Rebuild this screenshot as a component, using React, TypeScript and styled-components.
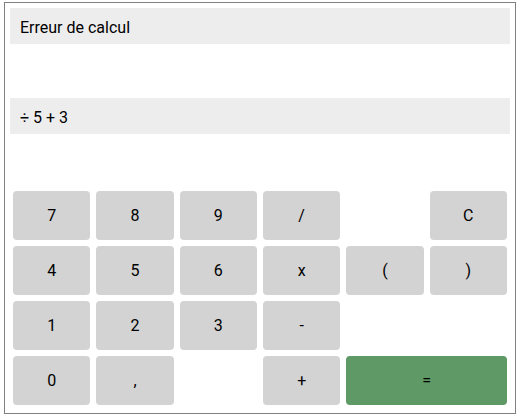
import React from "react";
import styled, { createGlobalStyle } from "styled-components";

const Global = createGlobalStyle`
  html, body { margin: 0; padding: 0; background: #ffffff; }
  body { font-family: Roboto, "Liberation Sans", Arial, sans-serif; }
`;

const Frame = styled.div`
  box-sizing: border-box;
  margin: 2px 0 0 4px;
  width: 512px;
  height: 412px;
  border: 1px solid #808080;
  padding: 5px;
  display: flex;
  flex-direction: column;
`;

const Display = styled.div`
  box-sizing: border-box;
  height: 36px;
  padding: 3px 10px 0;
  line-height: 33px;
  background: #eeedee;
  font-size: 16px;
  color: #000;
  margin-bottom: 54px;
  white-space: nowrap;
  overflow: hidden;
`;

const Keypad = styled.div`
  display: grid;
  grid-template-columns: repeat(6, 1fr);
  grid-auto-rows: 55px;
`;

const Key = styled.button<{ $row: number; $col: number; $span?: number; $accent?: boolean }>`
  margin: 3px;
  border: none;
  border-radius: 4px;
  background: ${(p) => (p.$accent ? "#5f9965" : "#d3d3d3")};
  color: #000;
  font-family: Roboto, "Liberation Sans", Arial, sans-serif;
  font-size: 16px;
  padding: 0;
  cursor: pointer;
  grid-row: ${(p) => p.$row};
  grid-column: ${(p) => `${p.$col} / span ${p.$span ?? 1}`};
`;

type K = { label: string; col: number; span?: number; accent?: boolean };

const keys: K[][] = [
  [
    { label: "7", col: 1 },
    { label: "8", col: 2 },
    { label: "9", col: 3 },
    { label: "/", col: 4 },
    { label: "C", col: 6 },
  ],
  [
    { label: "4", col: 1 },
    { label: "5", col: 2 },
    { label: "6", col: 3 },
    { label: "x", col: 4 },
    { label: "(", col: 5 },
    { label: ")", col: 6 },
  ],
  [
    { label: "1", col: 1 },
    { label: "2", col: 2 },
    { label: "3", col: 3 },
    { label: "-", col: 4 },
  ],
  [
    { label: "0", col: 1 },
    { label: ",", col: 2 },
    { label: "+", col: 4 },
    { label: "=", col: 5, span: 2, accent: true },
  ],
];

export default function App() {
  return (
    <>
      <Global />
      <Frame>
        <Display>Erreur de calcul</Display>
        <Display>÷ 5 + 3</Display>
        <Keypad>
          {keys.map((row, r) =>
            row.map((k) => (
              <Key
                key={k.label}
                $row={r + 1}
                $col={k.col}
                $span={k.span}
                $accent={k.accent}
              >
                {k.label}
              </Key>
            ))
          )}
        </Keypad>
      </Frame>
    </>
  );
}
